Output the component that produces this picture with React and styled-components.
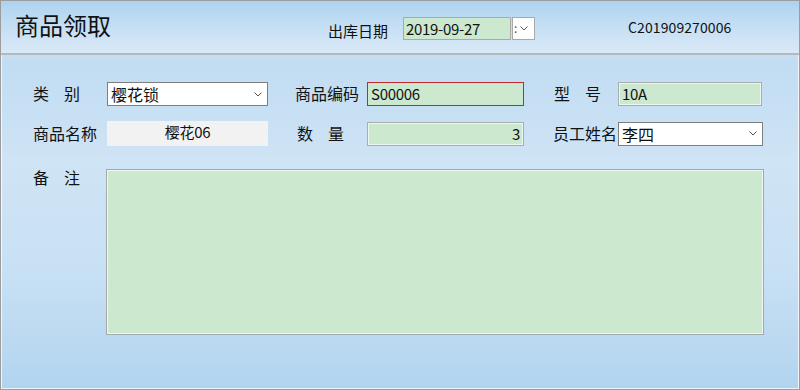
import React from 'react';
import styled, { createGlobalStyle } from 'styled-components';

const GlobalStyle = createGlobalStyle`
  html, body {
    margin: 0;
    padding: 0;
    background: #fff;
  }
  body {
    font-family: "Noto Sans CJK SC", "Microsoft YaHei", sans-serif;
    color: #111;
  }
`;

const WindowEl = styled.div`
  width: 800px;
  height: 390px;
  box-sizing: border-box;
  border: 1px solid #9c9c9c;
  box-shadow: inset 0 0 0 1px rgba(255, 255, 255, 0.75);
  background: linear-gradient(
    180deg,
    #d6e8f6 0px,
    #cde3f5 40px,
    #c2dcf2 62px,
    #c6dff3 100px,
    #cfe4f5 160px,
    #c9e1f4 260px,
    #bcd9f1 340px,
    #b1d4ef 388px
  );
  display: flex;
  flex-direction: column;
  overflow: hidden;
`;

const HeaderEl = styled.div`
  height: 52px;
  flex: none;
  display: flex;
  align-items: center;
  padding-left: 14px;
  border-bottom: 2px solid #b3b9bf;
  background: linear-gradient(180deg, #add3f0 0%, #c3def4 45%, #dae9f6 100%);
`;

const Title = styled.div`
  width: 313px;
  font-size: 24px;
  line-height: 1;
  margin-top: -4px;
  color: #111;
`;

const HeaderLabel = styled.div`
  width: 75px;
  font-size: 15px;
  margin-top: 6px;
`;

const DatePicker = styled.div`
  display: flex;
  height: 23px;
  margin-top: 2px;
`;

const DateText = styled.div`
  width: 104px;
  border: 1px solid #a9a9a9;
  background: #cce8cf;
  font-size: 15px;
  line-height: 21px;
  padding-left: 2px;
  letter-spacing: -0.3px;
`;

const DropButton = styled.div`
  width: 20px;
  margin-left: 1px;
  border: 1px solid #a9a9a9;
  background: #fff;
  display: flex;
  align-items: center;
  font-size: 12px;
  line-height: 1;
  color: #6a5020;
  gap: 3px;
  padding-left: 1px;
`;

const OrderNo = styled.div`
  margin-left: 93px;
  font-size: 14px;
  letter-spacing: 0.1px;
`;

const BodyEl = styled.div`
  padding: 27px 0 0 32px;
`;

const FormGrid = styled.div`
  display: grid;
  grid-template-columns: 74px 188px 72px 186px 65px 145px;
  grid-template-rows: 24px 25px;
  row-gap: 15px;
  align-items: center;
`;

const Label = styled.div`
  font-size: 16px;
  line-height: 20px;
  white-space: nowrap;
  letter-spacing: ${({ spaced }) => (spaced ? '15px' : '0')};
  padding-left: ${({ indent }) => indent || 0}px;
  margin-top: -2px;
`;

const RemarkLabel = styled(Label)`
  width: 73px;
  flex: none;
  margin-top: -2px;
`;

const Field = styled.div`
  box-sizing: border-box;
  width: ${({ w }) => w}px;
  height: ${({ h }) => h || 24}px;
  border: 1px solid ${({ error }) => (error ? '#c3282e' : '#a8adb2')};
  box-shadow: ${({ error }) => (error ? 'none' : 'inset 0 0 0 1px rgba(255,255,255,0.6)')};
  background: #cce8cf;
  font-size: 15px;
  line-height: 22px;
  padding: 0 3px;
  text-align: ${({ right }) => (right ? 'right' : 'left')};
  letter-spacing: -0.3px;
`;

const Select = styled.div`
  box-sizing: border-box;
  width: ${({ w }) => w}px;
  height: ${({ h }) => h || 24}px;
  border: 1px solid #7e7e7e;
  background: #fff;
  display: flex;
  align-items: center;
  justify-content: space-between;
  padding: 0 5px 0 3px;
  font-size: 16px;
`;

const ReadOnlyBox = styled.div`
  box-sizing: border-box;
  width: 161px;
  height: 25px;
  background: #f2f2f2;
  text-align: center;
  font-size: 15px;
  line-height: 22px;
  letter-spacing: -0.3px;
`;

const RemarkRow = styled.div`
  display: flex;
  margin-top: 23px;
`;

const RemarkArea = styled.div`
  box-sizing: border-box;
  width: 658px;
  height: 166px;
  border: 1px solid #a3a8ad;
  box-shadow: inset 0 0 0 1px rgba(255, 255, 255, 0.7);
  background: #cce8cf;
`;

const Chevron = () => (
  <svg width="8" height="5" viewBox="0 0 8 5">
    <path d="M0.5 0.5 L4 4 L7.5 0.5" fill="none" stroke="#555" strokeWidth="1" />
  </svg>
);

const App = () => {
  return (
    <>
      <GlobalStyle />
      <WindowEl>
        <HeaderEl>
          <Title>商品领取</Title>
          <HeaderLabel>出库日期</HeaderLabel>
          <DatePicker>
            <DateText>2019-09-27</DateText>
            <DropButton>
              <span>:</span>
              <Chevron />
            </DropButton>
          </DatePicker>
          <OrderNo>C201909270006</OrderNo>
        </HeaderEl>

        <BodyEl>
          <FormGrid>
            <Label spaced>类别</Label>
            <Select w={161}>
              <span>樱花锁</span>
              <Chevron />
            </Select>
            <Label>商品编码</Label>
            <Field w={157} error>S00006</Field>
            <Label spaced indent={1}>型号</Label>
            <Field w={144}>10A</Field>

            <Label>商品名称</Label>
            <ReadOnlyBox>樱花06</ReadOnlyBox>
            <Label spaced indent={2}>数量</Label>
            <Field w={157} h={24} right>3</Field>
            <Label>员工姓名</Label>
            <Select w={145}>
              <span>李四</span>
              <Chevron />
            </Select>
          </FormGrid>

          <RemarkRow>
            <RemarkLabel spaced>备注</RemarkLabel>
            <RemarkArea />
          </RemarkRow>
        </BodyEl>
      </WindowEl>
    </>
  );
};

export default App;
